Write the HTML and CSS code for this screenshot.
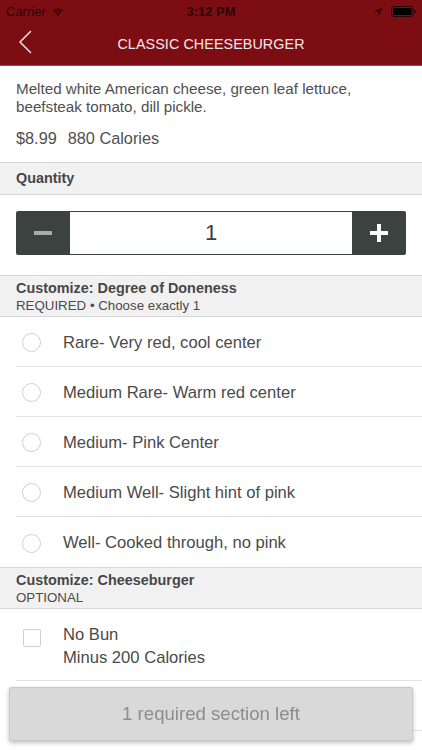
FILE: index.html
```html
<!DOCTYPE html>
<html>
<head>
<meta charset="utf-8">
<link rel="stylesheet" href="styles.css">
</head>
<body>
<div class="app">
  <div class="status">
    <div class="status-left">
      <span class="carrier">Carrier</span>
      <svg class="wifi" width="12" height="9" viewBox="0 0 12 9"><path d="M6 9 L4 6.6 A3 3 0 0 1 8 6.6 Z" fill="#2b0406"/><path d="M2.6 5.2 A5 5 0 0 1 9.4 5.2 L8.6 6.1 A3.8 3.8 0 0 0 3.4 6.1 Z" fill="#2b0406"/><path d="M1 3.4 A7.4 7.4 0 0 1 11 3.4 L10.1 4.4 A6.1 6.1 0 0 0 1.9 4.4 Z" fill="#2b0406"/></svg>
    </div>
    <div class="time">3:12 PM</div>
    <div class="status-right">
      <svg width="9" height="9" viewBox="0 0 9 9"><path d="M8.5 0.5 L0.5 4 L4.2 4.8 L5 8.5 Z" fill="#2b0406"/></svg>
      <svg width="25" height="11" viewBox="0 0 25 11"><rect x="0.5" y="0.5" width="21.5" height="10" rx="2.5" fill="none" stroke="#2b0406"/><rect x="2" y="2" width="18.5" height="7" rx="1.2" fill="#000"/><rect x="23" y="3.5" width="1.5" height="4" rx="0.7" fill="#2b0406"/></svg>
    </div>
  </div>
  <div class="nav">
    <svg class="back" width="14" height="24" viewBox="0 0 14 24"><path d="M12.5 1.5 L2 12 L12.5 22.5" fill="none" stroke="#f2dada" stroke-width="1.6" stroke-linecap="round" stroke-linejoin="round"/></svg>
    <div class="title">CLASSIC CHEESEBURGER</div>
  </div>

  <div class="intro">
    <p class="desc">Melted white American cheese, green leaf lettuce, beefsteak tomato, dill pickle.</p>
    <p class="price"><span>$8.99</span><span>880 Calories</span></p>
  </div>

  <div class="section-head single"><div class="sh-title">Quantity</div></div>

  <div class="qty-wrap">
    <div class="stepper">
      <div class="step-btn minus"><span class="bar"></span></div>
      <div class="step-val">1</div>
      <div class="step-btn plus"><span class="bar"></span><span class="bar vert"></span></div>
    </div>
  </div>

  <div class="section-head">
    <div class="sh-title">Customize: Degree of Doneness</div>
    <div class="sh-sub">REQUIRED • Choose exactly 1</div>
  </div>

  <ul class="options">
    <li class="opt"><span class="radio"></span><span class="label">Rare- Very red, cool center</span></li>
    <li class="opt"><span class="radio"></span><span class="label">Medium Rare- Warm red center</span></li>
    <li class="opt"><span class="radio"></span><span class="label">Medium- Pink Center</span></li>
    <li class="opt"><span class="radio"></span><span class="label">Medium Well- Slight hint of pink</span></li>
    <li class="opt last"><span class="radio"></span><span class="label">Well- Cooked through, no pink</span></li>
  </ul>

  <div class="section-head">
    <div class="sh-title">Customize: Cheeseburger</div>
    <div class="sh-sub">OPTIONAL</div>
  </div>

  <ul class="options">
    <li class="opt check-opt"><span class="check"></span><span class="label two"><span>No Bun</span><span>Minus 200 Calories</span></span></li>
    <li class="opt spacer"></li>
  </ul>

  <div class="footer-btn">1 required section left</div>
</div>
</body>
</html>
```

FILE: styles.css
```css
html, body {
  margin: 0;
  padding: 0;
  background: #fff;
}
body {
  font-family: "Liberation Sans", Arial, sans-serif;
  color: #4a4a4a;
  width: 422px;
  height: 750px;
  overflow: hidden;
}
.app {
  width: 422px;
}
.status {
  height: 22px;
  background: #7c0e13;
  display: flex;
  align-items: center;
  justify-content: space-between;
  padding: 0 6px;
  box-sizing: border-box;
  color: #2b0406;
  font-size: 13px;
}
.status-left, .status-right {
  display: flex;
  align-items: center;
  gap: 6px;
  width: 90px;
}
.status-right {
  justify-content: flex-end;
  gap: 8px;
}
.time {
  font-weight: bold;
  font-size: 13px;
}
.nav {
  height: 44px;
  background: #7c0e13;
  display: flex;
  align-items: center;
  justify-content: center;
  position: relative;
  border-bottom: 1px solid #9c4a4d;
  box-sizing: border-box;
}
.back {
  position: absolute;
  left: 18px;
  top: 8px;
}
.title {
  color: #f6e6e6;
  font-size: 14.3px;
  letter-spacing: 0.1px;
}
.intro {
  padding: 14px 16px 14px;
  border-bottom: 1px solid #d4d4d4;
}
.desc {
  margin: 0;
  font-size: 15.2px;
  line-height: 18px;
  color: #4f4f4f;
  max-width: 380px;
}
.price {
  margin: 12px 0 0;
  font-size: 16.3px;
  line-height: 20px;
  display: flex;
  gap: 11px;
  color: #4f4f4f;
}
.section-head {
  background: #f1f1f1;
  padding: 4px 16px 2px;
  border-bottom: 1px solid #d8d8d8;
}
.section-head.single {
  padding: 7px 16px 7px;
}
.qty-wrap + .section-head {
  border-top: 1px solid #d8d8d8;
}
.options + .section-head {
  border-top: 1px solid #d8d8d8;
}
.sh-title {
  font-weight: bold;
  font-size: 14.4px;
  line-height: 17px;
  color: #474747;
}
.sh-sub {
  font-size: 13.3px;
  line-height: 17px;
  color: #4a4a4a;
}
.qty-wrap {
  padding: 16px 16px 20px;
}
.stepper {
  display: flex;
  height: 44px;
  background: #3b4240;
  border-radius: 2px;
  overflow: hidden;
}
.step-btn {
  width: 54px;
  display: flex;
  align-items: center;
  justify-content: center;
  position: relative;
}
.step-btn .bar {
  display: block;
  width: 18px;
  height: 4px;
  background: #a7abaa;
}
.step-btn.plus .bar {
  background: #fff;
  position: absolute;
  left: 18px;
  top: 20px;
}
.step-btn.plus .bar.vert {
  width: 4px;
  height: 18px;
  left: 25px;
  top: 13px;
}
.step-val {
  flex: 1;
  background: #fff;
  margin: 1px 0;
  display: flex;
  align-items: center;
  justify-content: center;
  font-size: 22px;
  color: #3d3d3d;
}
.options {
  list-style: none;
  margin: 0;
  padding: 0;
}
.opt {
  height: 49px;
  box-sizing: border-box;
  height: 50px;
  padding-top: 2px;
  margin-left: 16px;
  border-bottom: 1px solid #e2e2e2;
  display: flex;
  align-items: center;
}
.opt.last {
  border-bottom: none;
  height: 50px;
}
.radio {
  width: 17px;
  height: 17px;
  border: 1.5px solid #cfcfcf;
  border-radius: 50%;
  margin-left: 6px;
  flex: none;
}
.label {
  margin-left: 22px;
  font-size: 16.6px;
  color: #4a4a4a;
}
.check-opt {
  height: 72px;
  padding-top: 0;
  align-items: flex-start;
}
.check {
  width: 16px;
  height: 16px;
  border: 1.5px solid #cfcfcf;
  border-radius: 2px;
  margin-left: 7px;
  margin-top: 20px;
  flex: none;
}
.label.two {
  margin-left: 22px;
  margin-top: 14px;
  display: flex;
  flex-direction: column;
  line-height: 23px;
}
.spacer {
  height: 50px;
}
.footer-btn {
  position: fixed;
  left: 9px;
  top: 687px;
  width: 404px;
  height: 54px;
  box-sizing: border-box;
  background: #d9d9d9;
  border: 1px solid #c9c9c9;
  border-radius: 2px;
  box-shadow: 0 2px 4px rgba(0,0,0,0.25);
  display: flex;
  align-items: center;
  justify-content: center;
  font-size: 18.6px;
  color: #8c8c8c;
}
```
